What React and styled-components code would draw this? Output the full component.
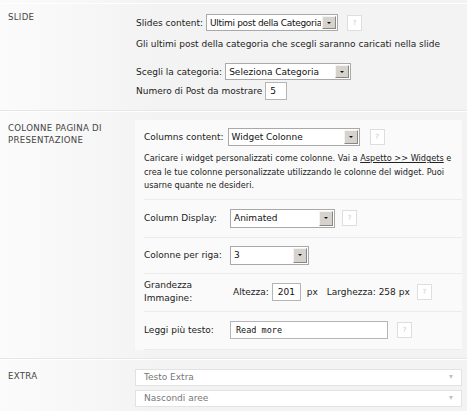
import React from 'react';
import styled, { createGlobalStyle } from 'styled-components';

const GlobalStyle = createGlobalStyle`
  html, body { margin: 0; padding: 0; background: #f3f3f3; }
  body {
    font-family: "DejaVu Sans", "Liberation Sans", sans-serif;
    font-size: 9px;
    color: #222;
  }
`;

const Page = styled.div`
  width: 467px;
  height: 411px;
  overflow: hidden;
  padding-top: 3px;
  box-sizing: border-box;
  background: linear-gradient(to right, #fbfbfb 0, #f7f7f7 80px, #f3f3f3 150px, #f3f3f3 100%);
`;

const Section = styled.div`
  display: grid;
  grid-template-columns: 135px 1fr;
  padding: ${p => p.$pad || '10px 5px 10px 0'};
  border-top: 1px solid #fff;
  border-bottom: ${p => (p.$last ? 'none' : '1px solid #e6e6e6')};
`;

const Label = styled.div`
  margin-top: ${p => p.$top || '0'};
  padding-left: 8px;
  font-size: 8.6px;
  line-height: 12px;
  letter-spacing: 0.3px;
  color: #444;
  text-transform: uppercase;
`;

const Content = styled.div`
  display: flex;
  flex-direction: column;
  padding-left: ${p => p.$indent || '1px'};
`;

const Line = styled.div`
  display: flex;
  align-items: center;
  gap: ${p => p.$gap || '3px'};
  margin-top: ${p => p.$mt || '0'};
  height: ${p => p.$h || '17px'};
  white-space: nowrap;
`;

const Text = styled.p`
  margin: ${p => p.$mt || '0'} 0 0;
  font-size: ${p => p.$fs || '9px'};
  line-height: ${p => p.$lh || '14px'};
  white-space: nowrap;
  color: #222;
`;

const Link = styled.a`
  color: #222;
  text-decoration: underline;
`;

const SelectBox = styled.div`
  display: flex;
  align-items: stretch;
  width: ${p => p.$w}px;
  height: ${p => p.$h || 17}px;
  box-sizing: border-box;
  border: 1px solid #a9a9a9;
  background: #fff;
  flex-shrink: 0;
`;

const SelectValue = styled.span`
  flex: 1;
  display: flex;
  align-items: center;
  padding-left: 3px;
  overflow: hidden;
  white-space: nowrap;
  letter-spacing: ${p => (p.$tight ? '-0.3px' : '0')};
  color: #111;
`;

const SelectButton = styled.span`
  width: 14px;
  margin: 1px;
  background: #d6d3ce;
  border: 1px solid;
  border-color: #f4f3f1 #8a8781 #8a8781 #f4f3f1;
  box-sizing: border-box;
  display: flex;
  align-items: center;
  justify-content: center;
  flex-shrink: 0;
  &::after {
    content: '';
    border-left: 2px solid transparent;
    border-right: 2px solid transparent;
    border-top: 2px solid #111;
  }
`;

const Input = styled.div`
  width: ${p => p.$w}px;
  height: ${p => p.$h || 18}px;
  box-sizing: border-box;
  border: 1px solid #b5b5b5;
  background: #fff;
  display: flex;
  align-items: center;
  padding-left: ${p => p.$pl || 5}px;
  font-family: ${p => (p.$mono ? '"DejaVu Sans Mono", "Liberation Mono", monospace' : 'inherit')};
  font-size: ${p => (p.$mono ? '8.5px' : '9px')};
  flex-shrink: 0;
  color: #111;
`;

const Help = styled.span`
  width: 15px;
  height: 16px;
  box-sizing: border-box;
  border: 1px solid #dedede;
  background: #fff;
  color: #c8c8c8;
  font-size: 7px;
  display: flex;
  align-items: center;
  justify-content: center;
  margin-left: ${p => p.$ml || '6px'};
  flex-shrink: 0;
`;

const Panel = styled.div`
  background: #fafafa;
  padding: 8px 0 0 9px;
`;

const Intro = styled.div`
  padding-bottom: 6px;
  border-bottom: 1px solid #ececec;
`;

const OptionRow = styled.div`
  display: grid;
  grid-template-columns: 86px 1fr;
  align-items: center;
  height: ${p => p.$h}px;
  border-bottom: 1px solid #ececec;
`;

const OptionLabel = styled.div`
  line-height: 13px;
  color: #222;
`;

const OptionControls = styled.div`
  display: flex;
  align-items: center;
  white-space: nowrap;
`;

const Inline = styled.span`
  margin: ${p => p.$m || '0'};
`;

const Dropdown = styled.div`
  height: 17px;
  box-sizing: border-box;
  border: 1px solid #e2e2e2;
  background: #fff;
  display: flex;
  align-items: center;
  justify-content: space-between;
  padding: 0 8px 0 8px;
  color: #777;
  margin-bottom: 4px;
  &::after {
    content: '';
    border-left: 2.5px solid transparent;
    border-right: 2.5px solid transparent;
    border-top: 4px solid #c2c2c2;
  }
`;

function Select({ w, h, value, tight }) {
  return (
    <SelectBox $w={w} $h={h}>
      <SelectValue $tight={tight}>{value}</SelectValue>
      <SelectButton />
    </SelectBox>
  );
}

export default function App() {
  return (
    <Page>
      <GlobalStyle />
      <Section>
        <Label $top="-3px">Slide</Label>
        <Content>
          <Line>
            <span>Slides content:</span>
            <Select w={132} value="Ultimi post della Categoria" tight />
            <Help>?</Help>
          </Line>
          <Text $mt="6px">Gli ultimi post della categoria che scegli saranno caricati nella slide</Text>
          <Line $mt="12px">
            <span>Scegli la categoria:</span>
            <Select w={126} value="Seleziona Categoria" />
          </Line>
          <Line $mt="2px" $h="18px">
            <span>Numero di Post da mostrare</span>
            <Input $w={22} $pl={4}>5</Input>
          </Line>
        </Content>
      </Section>

      <Section $pad="8px 5px 8px 0">
        <Label $top="2px">Colonne pagina di presentazione</Label>
        <Panel>
          <Intro>
            <Line $h="18px" $gap="4px">
              <span>Columns content:</span>
              <Select w={132} h={18} value="Widget Colonne" />
              <Help>?</Help>
            </Line>
            <Text $mt="6px" $lh="13.5px" $fs="8.2px">
              Caricare i widget personalizzati come colonne. Vai a <Link>Aspetto &gt;&gt; Widgets</Link> e<br />
              crea le tue colonne personalizzate utilizzando le colonne del widget. Puoi<br />
              usarne quante ne desideri.
            </Text>
          </Intro>
          <OptionRow $h={37}>
            <OptionLabel>Column Display:</OptionLabel>
            <OptionControls>
              <Select w={105} h={19} value="Animated" />
              <Help $ml="7px">?</Help>
            </OptionControls>
          </OptionRow>
          <OptionRow $h={35}>
            <OptionLabel>Colonne per riga:</OptionLabel>
            <OptionControls>
              <Select w={79} h={19} value="3" />
            </OptionControls>
          </OptionRow>
          <OptionRow $h={37}>
            <OptionLabel>Grandezza<br />Immagine:</OptionLabel>
            <OptionControls>
              <Inline $m="0 3px 0 3px">Altezza:</Inline>
              <Input $w={29} $pl={5}>201</Input>
              <Inline $m="0 0 0 6px">px</Inline>
              <Inline $m="0 0 0 9px">Larghezza: 258 px</Inline>
              <Help $ml="7px">?</Help>
            </OptionControls>
          </OptionRow>
          <OptionRow $h={37}>
            <OptionLabel>Leggi più testo:</OptionLabel>
            <OptionControls>
              <Input $w={158} $mono>Read more</Input>
              <Help $ml="9px">?</Help>
            </OptionControls>
          </OptionRow>
        </Panel>
      </Section>

      <Section $pad="9px 5px 0 0" $last>
        <Label $top="1px">Extra</Label>
        <Content $indent="0">
          <Dropdown>Testo Extra</Dropdown>
          <Dropdown>Nascondi aree</Dropdown>
        </Content>
      </Section>
    </Page>
  );
}
